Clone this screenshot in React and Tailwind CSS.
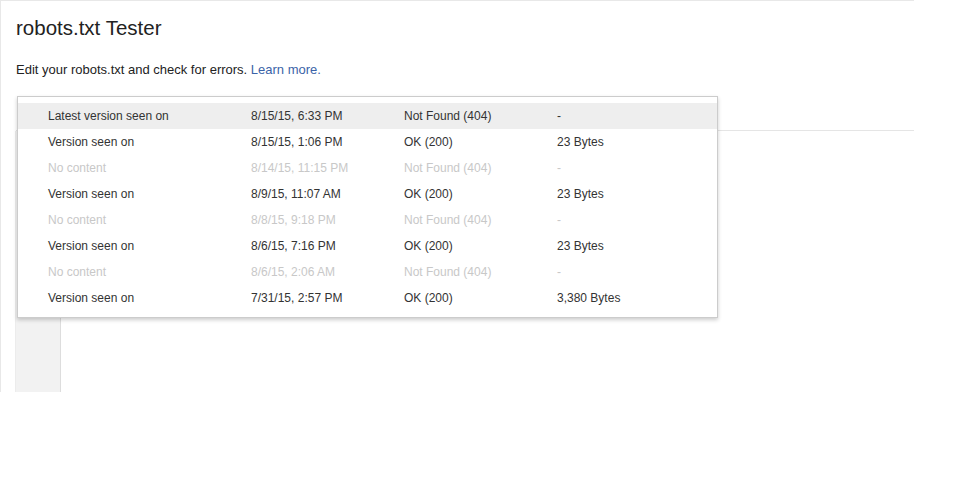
import React from "react";

const rows = [
  { a: "Latest version seen on", d: "8/15/15, 6:33 PM", s: "Not Found (404)", z: "-", on: true, active: true },
  { a: "Version seen on", d: "8/15/15, 1:06 PM", s: "OK (200)", z: "23 Bytes", on: true },
  { a: "No content", d: "8/14/15, 11:15 PM", s: "Not Found (404)", z: "-", on: false },
  { a: "Version seen on", d: "8/9/15, 11:07 AM", s: "OK (200)", z: "23 Bytes", on: true },
  { a: "No content", d: "8/8/15, 9:18 PM", s: "Not Found (404)", z: "-", on: false },
  { a: "Version seen on", d: "8/6/15, 7:16 PM", s: "OK (200)", z: "23 Bytes", on: true },
  { a: "No content", d: "8/6/15, 2:06 AM", s: "Not Found (404)", z: "-", on: false },
  { a: "Version seen on", d: "7/31/15, 2:57 PM", s: "OK (200)", z: "3,380 Bytes", on: true },
];

export default function App() {
  return (
    <div className="w-[975px] h-[488px] bg-white" style={{ fontFamily: '"Liberation Sans", Arial, sans-serif' }}>
      <div className="relative w-[914px] h-[392px] border-t border-l border-[#e8e8e8] flex flex-col">
        <h1 className="ml-[15px] mt-[15px] text-[20.5px] leading-[24px] text-[#222] font-normal">robots.txt Tester</h1>
        <p className="ml-[15px] mt-[22px] text-[13px] leading-[16px] text-[#222]">
          Edit your robots.txt and check for errors. <span className="text-[#3b63a8]">Learn more.</span>
        </p>
        <div className="ml-[15px] h-[53px] border-b border-[#e5e5e5]" />
        <div className="flex-1 flex pl-[14px]">
          <div className="w-[46px] bg-[#f2f2f2] border-l border-[#ececec] border-r border-r-[#dddddd]" />
          <div className="flex-1" />
        </div>

        <div className="absolute left-[16px] top-[95px] w-[701px] bg-white border border-[#cccccc] shadow-[0_2px_4px_rgba(0,0,0,0.2)] pt-[6px] pb-[6px]">
          {rows.map((r, i) => (
            <div
              key={i}
              className={`flex h-[26px] items-center pl-[30px] text-[12px] ${r.active ? "bg-[#eeeeee]" : ""} ${r.on ? "text-[#333333]" : "text-[#c8c8c8]"}`}
            >
              <div className="w-[203px]">{r.a}</div>
              <div className="w-[153px]">{r.d}</div>
              <div className="w-[153px]">{r.s}</div>
              <div>{r.z}</div>
            </div>
          ))}
        </div>
      </div>
    </div>
  );
}
